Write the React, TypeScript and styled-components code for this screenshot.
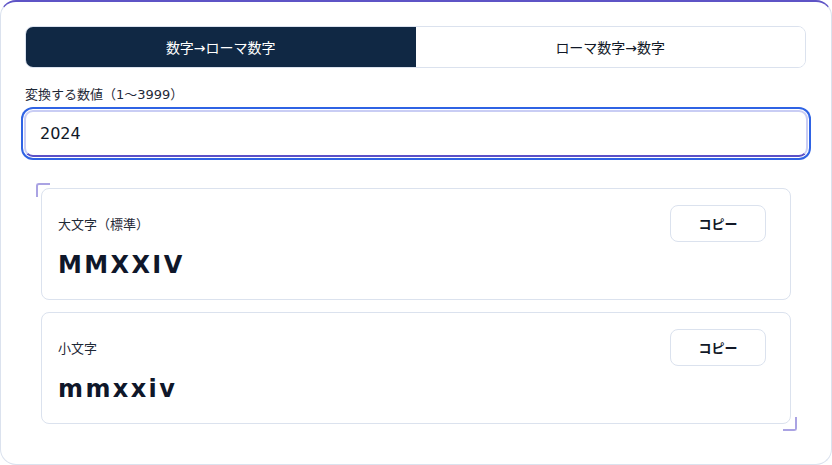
import styled, { createGlobalStyle } from "styled-components";

const GlobalStyle = createGlobalStyle`
  html, body {
    margin: 0;
    padding: 0;
    background: #ffffff;
  }
  body {
    font-family: "DejaVu Sans", "Noto Sans CJK JP", sans-serif;
    color: #111827;
  }
  * { box-sizing: border-box; }
`;

const Card = styled.div`
  width: 832px;
  height: 465px;
  background: #ffffff;
  border: 1px solid #dbe2ee;
  border-top: 2px solid #5e54c6;
  border-radius: 16px;
  padding: 24px 24px 0 24px;
  display: flex;
  flex-direction: column;
`;

const Tabs = styled.div`
  display: grid;
  grid-template-columns: 1fr 1fr;
  border: 1px solid #dbe2ee;
  border-radius: 8px;
  overflow: hidden;
  height: 42px;
  margin-right: 1px;
`;

const Tab = styled.button<{ $active?: boolean }>`
  border: none;
  font-family: "DejaVu Sans", "Noto Sans CJK JP", sans-serif;
  font-size: 14px;
  background: ${(p) => (p.$active ? "#102844" : "#ffffff")};
  color: ${(p) => (p.$active ? "#ffffff" : "#111827")};
  cursor: pointer;
`;

const Field = styled.div`
  display: flex;
  flex-direction: column;
  gap: 7px;
  margin-top: 19px;
`;

const Label = styled.label`
  font-size: 13px;
  color: #1f2937;
  line-height: 16px;
`;

const Input = styled.input`
  height: 47px;
  border: 2px solid #c9cdf4;
  border-bottom-color: #5b50c8;
  border-radius: 9px;
  padding: 0 14px;
  font-family: "DejaVu Sans", "Noto Sans CJK JP", sans-serif;
  font-size: 16px;
  color: #111827;
  outline: none;
  box-shadow: 0 0 0 1px #ffffff, 0 0 0 3px #2f63e4;
  margin: 0 -1px;
`;

const Results = styled.div`
  position: relative;
  margin: 26px 10px 0 11px;
  padding: 5px 6px 7px 5px;
  display: flex;
  flex-direction: column;
  gap: 12px;

  &::before,
  &::after {
    content: "";
    position: absolute;
    width: 12px;
    height: 12px;
    border-color: #aaa3e3;
    border-style: solid;
  }
  &::before {
    top: 0;
    left: 0;
    border-width: 2px 0 0 2px;
    border-top-left-radius: 3px;
  }
  &::after {
    bottom: 0;
    right: 0;
    border-width: 0 2px 2px 0;
    border-bottom-right-radius: 3px;
  }
`;

const ResultCard = styled.div`
  border: 1px solid #dbe2ee;
  border-radius: 8px;
  padding: 16px 24px 16px 16px;
  height: 112px;
  display: flex;
  flex-direction: column;
  gap: 8px;
  background: #ffffff;
`;

const ResultHead = styled.div`
  display: flex;
  align-items: center;
  justify-content: space-between;
`;

const ResultLabel = styled.span`
  font-size: 13px;
  color: #1f2937;
`;

const CopyButton = styled.button`
  width: 96px;
  height: 37px;
  border: 1px solid #dbe2ee;
  border-radius: 8px;
  background: #ffffff;
  font-family: "DejaVu Sans", "Noto Sans CJK JP", sans-serif;
  font-size: 13px;
  font-weight: 700;
  color: #111827;
  cursor: pointer;
`;

const Numeral = styled.div`
  font-size: 24px;
  font-weight: 700;
  letter-spacing: 0.1em;
  color: #0f172a;
  line-height: 30px;
`;

const results = [
  { label: "大文字（標準）", value: "MMXXIV" },
  { label: "小文字", value: "mmxxiv" },
];

export default function App() {
  return (
    <>
      <GlobalStyle />
      <Card>
        <Tabs>
          <Tab $active>数字→ローマ数字</Tab>
          <Tab>ローマ数字→数字</Tab>
        </Tabs>
        <Field>
          <Label htmlFor="num">変換する数値（1〜3999）</Label>
          <Input id="num" type="text" defaultValue="2024" />
        </Field>
        <Results>
          {results.map((r) => (
            <ResultCard key={r.label}>
              <ResultHead>
                <ResultLabel>{r.label}</ResultLabel>
                <CopyButton>コピー</CopyButton>
              </ResultHead>
              <Numeral>{r.value}</Numeral>
            </ResultCard>
          ))}
        </Results>
      </Card>
    </>
  );
}
